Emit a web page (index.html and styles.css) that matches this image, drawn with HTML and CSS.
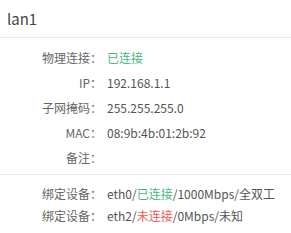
FILE: index.html
```html
<!DOCTYPE html>
<html lang="zh">
  <head>
    <meta charset="utf-8">
    <title>lan1</title>
    <link rel="stylesheet" href="styles.css">
  </head>
  <body>
    <div class="port-card">
      <div class="port-title">lan1</div>
      <div class="port-section">
        <div class="info-row">
          <span class="info-label">物理连接：</span>
          <span class="info-value status-on">已连接</span>
        </div>
        <div class="info-row">
          <span class="info-label">IP：</span>
          <span class="info-value">192.168.1.1</span>
        </div>
        <div class="info-row">
          <span class="info-label">子网掩码：</span>
          <span class="info-value">255.255.255.0</span>
        </div>
        <div class="info-row">
          <span class="info-label">MAC：</span>
          <span class="info-value">08:9b:4b:01:2b:92</span>
        </div>
        <div class="info-row">
          <span class="info-label">备注：</span>
          <span class="info-value"></span>
        </div>
      </div>
      <div class="port-section bind-section">
        <div class="info-row">
          <span class="info-label">绑定设备：</span>
          <span class="info-value">eth0/<span class="status-on">已连接</span>/1000Mbps/全双工</span>
        </div>
        <div class="info-row">
          <span class="info-label">绑定设备：</span>
          <span class="info-value">eth2/<span class="status-off">未连接</span>/0Mbps/未知</span>
        </div>
      </div>
    </div>
  </body>
</html>
```

FILE: styles.css
```css
body {
  margin: 0;
  padding: 0;
  background: #fff;
  font-family: "Noto Sans CJK SC", "Noto Sans", sans-serif;
  color: #555;
}
.port-card {
  width: 291px;
}
.port-title {
  height: 37px;
  line-height: 37px;
  padding-left: 7px;
  font-size: 15px;
  color: #444;
  border-bottom: 1px solid #e8e8e8;
}
.port-section {
  padding: 7px 0 4px;
  border-bottom: 1px solid #e8e8e8;
}
.bind-section {
  border-bottom: none;
  padding-top: 7px;
}
.info-row {
  display: flex;
  height: 25px;
  align-items: center;
  font-size: 12px;
}
.bind-section .info-row {
  height: 22px;
}
.info-label {
  width: 102px;
  text-align: right;
  color: #666;
}
.info-value {
  margin-left: 5px;
  color: #555;
  white-space: nowrap;
}
.status-on {
  color: #47b881;
}
.status-off {
  color: #f05a5a;
}
```
